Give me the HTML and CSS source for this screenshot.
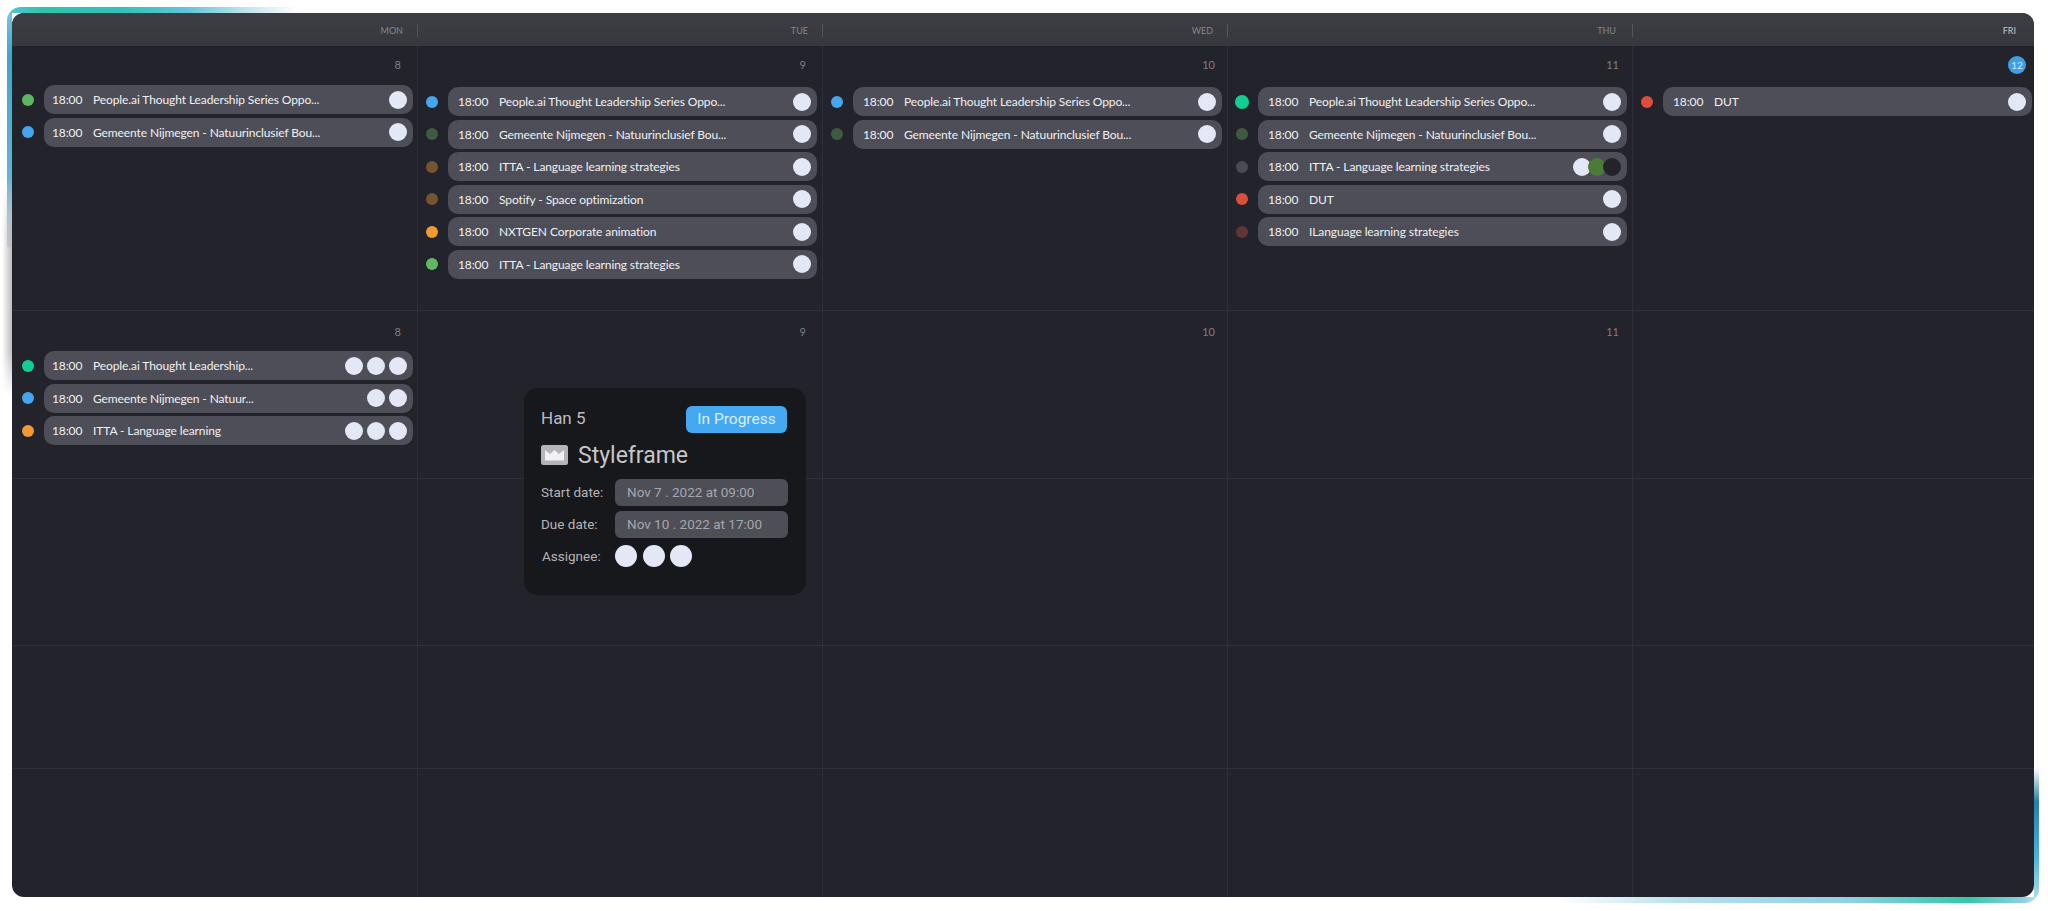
FILE: index.html
```html
<!DOCTYPE html>
<html>
<head>
    <title>Calendar</title>
    <link rel="stylesheet" href="styles.css">
</head>
<body>
    <div class="stage">
        <div class="edge-shade"></div>
        <div class="panel">
            <div class="week-head">
                <div class="day-name">MON</div>
                <div class="day-name">TUE</div>
                <div class="day-name">WED</div>
                <div class="day-name thu-name">THU</div>
                <div class="day-name today-name">FRI</div>
            </div>

            <div class="month">
                <!-- Week 1 -->
                <div class="cell cell-mon">
                    <div class="date">8</div>
                    <div class="events events-mon">
                        <div class="event"><span class="dot green"></span><div class="pill"><span class="time">18:00</span><span class="title">People.ai Thought Leadership Series Oppo...</span><span class="people"><i></i></span></div></div>
                        <div class="event"><span class="dot blue"></span><div class="pill"><span class="time">18:00</span><span class="title">Gemeente Nijmegen - Natuurinclusief Bou...</span><span class="people"><i></i></span></div></div>
                    </div>
                </div>
                <div class="cell">
                    <div class="date">9</div>
                    <div class="events">
                        <div class="event"><span class="dot blue"></span><div class="pill"><span class="time">18:00</span><span class="title">People.ai Thought Leadership Series Oppo...</span><span class="people"><i></i></span></div></div>
                        <div class="event"><span class="dot moss"></span><div class="pill"><span class="time">18:00</span><span class="title">Gemeente Nijmegen - Natuurinclusief Bou...</span><span class="people"><i></i></span></div></div>
                        <div class="event"><span class="dot brown"></span><div class="pill"><span class="time">18:00</span><span class="title">ITTA - Language learning strategies</span><span class="people"><i></i></span></div></div>
                        <div class="event"><span class="dot brown"></span><div class="pill"><span class="time">18:00</span><span class="title">Spotify - Space optimization</span><span class="people"><i></i></span></div></div>
                        <div class="event"><span class="dot orange"></span><div class="pill"><span class="time">18:00</span><span class="title">NXTGEN Corporate animation</span><span class="people"><i></i></span></div></div>
                        <div class="event"><span class="dot green"></span><div class="pill"><span class="time">18:00</span><span class="title">ITTA - Language learning strategies</span><span class="people"><i></i></span></div></div>
                    </div>
                </div>
                <div class="cell">
                    <div class="date date-ten">10</div>
                    <div class="events">
                        <div class="event"><span class="dot blue"></span><div class="pill"><span class="time">18:00</span><span class="title">People.ai Thought Leadership Series Oppo...</span><span class="people"><i></i></span></div></div>
                        <div class="event"><span class="dot moss"></span><div class="pill"><span class="time">18:00</span><span class="title">Gemeente Nijmegen - Natuurinclusief Bou...</span><span class="people"><i></i></span></div></div>
                    </div>
                </div>
                <div class="cell">
                    <div class="date date-eleven">11</div>
                    <div class="events">
                        <div class="event"><span class="dot teal big"></span><div class="pill"><span class="time">18:00</span><span class="title">People.ai Thought Leadership Series Oppo...</span><span class="people"><i></i></span></div></div>
                        <div class="event"><span class="dot moss"></span><div class="pill"><span class="time">18:00</span><span class="title">Gemeente Nijmegen - Natuurinclusief Bou...</span><span class="people"><i></i></span></div></div>
                        <div class="event"><span class="dot slate"></span><div class="pill"><span class="time">18:00</span><span class="title">ITTA - Language learning strategies</span><span class="people stacked"><i></i><i class="leaf"></i><i class="night"></i></span></div></div>
                        <div class="event"><span class="dot red"></span><div class="pill"><span class="time">18:00</span><span class="title">DUT</span><span class="people"><i></i></span></div></div>
                        <div class="event"><span class="dot maroon"></span><div class="pill"><span class="time">18:00</span><span class="title">ILanguage learning strategies</span><span class="people"><i></i></span></div></div>
                    </div>
                </div>
                <div class="cell cell-last">
                    <div class="date"><span class="today">12</span></div>
                    <div class="events">
                        <div class="event"><span class="dot red"></span><div class="pill"><span class="time">18:00</span><span class="title">DUT</span><span class="people"><i></i></span></div></div>
                    </div>
                </div>

                <!-- Week 2 -->
                <div class="cell cell-mon week-two">
                    <div class="date">8</div>
                    <div class="events events-low">
                        <div class="event"><span class="dot teal"></span><div class="pill"><span class="time">18:00</span><span class="title">People.ai Thought Leadership...</span><span class="people"><i></i><i></i><i></i></span></div></div>
                        <div class="event"><span class="dot blue"></span><div class="pill"><span class="time">18:00</span><span class="title">Gemeente Nijmegen - Natuur...</span><span class="people"><i></i><i></i></span></div></div>
                        <div class="event"><span class="dot orange"></span><div class="pill"><span class="time">18:00</span><span class="title">ITTA - Language learning</span><span class="people"><i></i><i></i><i></i></span></div></div>
                    </div>
                </div>
                <div class="cell week-two"><div class="date">9</div></div>
                <div class="cell week-two"><div class="date date-ten">10</div></div>
                <div class="cell week-two"><div class="date date-eleven">11</div></div>
                <div class="cell cell-last"></div>

                <!-- Empty weeks -->
                <div class="cell"></div><div class="cell"></div><div class="cell"></div><div class="cell"></div><div class="cell cell-last"></div>
                <div class="cell"></div><div class="cell"></div><div class="cell"></div><div class="cell"></div><div class="cell cell-last"></div>
                <div class="cell"></div><div class="cell"></div><div class="cell"></div><div class="cell"></div><div class="cell cell-last"></div>
            </div>

            <div class="card">
                <div class="card-top">
                    <span class="project">Han 5</span>
                    <span class="status">In Progress</span>
                </div>
                <div class="card-title">
                    <svg class="card-icon" viewBox="0 0 27 20">
                        <rect width="27" height="20" rx="2.5" fill="#b4b4ba"/>
                        <path d="M4 5 L9 9 L13.5 5 L18 9 L23 5 V15.5 H4 Z" fill="#f1f1f4"/>
                    </svg>
                    <span>Styleframe</span>
                </div>
                <div class="card-row">
                    <span class="card-label">Start date:</span>
                    <span class="card-field">Nov 7 . 2022 at 09:00</span>
                </div>
                <div class="card-row">
                    <span class="card-label">Due date:</span>
                    <span class="card-field">Nov 10 . 2022 at 17:00</span>
                </div>
                <div class="card-row">
                    <span class="card-label assignee">Assignee:</span>
                    <span class="card-people"><i></i><i></i><i></i></span>
                </div>
            </div>
        </div>
    </div>
</body>
</html>
```

FILE: styles.css
```css
body {
    margin: 0;
    background-color: #fff;
    font-family: 'Lato', sans-serif;
}

.stage {
    position: relative;
    padding: 13px 14px 14px 12px;
    height: 884px;
}

/* Colored glow peeking out behind the panel corners */
.stage::before {
    content: "";
    position: absolute;
    left: 7px;
    top: 7px;
    width: 290px;
    height: 240px;
    border-radius: 14px 0 0 0;
    background:
        linear-gradient(90deg, #5cc2d8 0, #2cc4ae 12%, #2fc3b8 40%, #62c4dc 62%, #bfe3ee 82%, rgba(255, 255, 255, 0) 100%) top left / 100% 6px no-repeat,
        linear-gradient(180deg, #7fc8e4 0, #3aa7cd 20%, #5fb5d6 70%, rgba(200, 200, 204, 0.8) 100%) top left / 5px 100% no-repeat;
}

.stage::after {
    content: "";
    position: absolute;
    right: 9px;
    bottom: 8px;
    width: 480px;
    height: 135px;
    border-radius: 0 0 14px 0;
    background:
        linear-gradient(90deg, rgba(255, 255, 255, 0) 0, #b8e0f0 25%, #8fd0e8 60%, #2fc9a8 85%, #8fd0e8 97%, #cfe8f4 100%) bottom right / 100% 6px no-repeat,
        linear-gradient(0deg, #b8e0ee 0, #4ab0d4 35%, #2a7fa6 75%, rgba(255, 255, 255, 0) 100%) bottom right / 5px 100% no-repeat;
}

/* Soft grey shadow down the left side */
.edge-shade {
    position: absolute;
    left: 2px;
    top: 180px;
    width: 10px;
    height: 215px;
    background: linear-gradient(90deg, rgba(190, 190, 195, 0), #bcbcc1);
    -webkit-mask-image: linear-gradient(180deg, transparent 0, #000 25%, #000 80%, transparent 100%);
    mask-image: linear-gradient(180deg, transparent 0, #000 25%, #000 80%, transparent 100%);
}

.panel {
    position: relative;
    z-index: 1;
    height: 884px;
    background-color: #23242b;
    border-radius: 12px;
    overflow: hidden;
    display: flex;
    flex-direction: column;
}

.week-head {
    display: grid;
    grid-template-columns: 406px repeat(3, 405px) 1fr;
    height: 33px;
    background: linear-gradient(180deg, #3d3d44, #37383e);
    flex-shrink: 0;
}

.day-name {
    height: 13px;
    margin-top: 11px;
    padding-right: 14px;
    border-right: 1px solid #55565c;
    color: #85868c;
    font-size: 9px;
    line-height: 13px;
    text-align: right;
}

.thu-name {
    padding-right: 16px;
}

.today-name {
    border-right: none;
    padding-right: 18px;
    color: #c4c5ca;
}

.month {
    flex: 1;
    display: grid;
    grid-template-columns: 406px repeat(3, 405px) 1fr;
    grid-template-rows: 265px 168px 167px 123px 1fr;
}

.cell {
    box-sizing: border-box;
    padding: 0 5px 0 8px;
    border-right: 1px solid #2f3037;
    border-bottom: 1px solid #2f3037;
}

.cell:nth-last-child(-n+5) {
    border-bottom: none;
}

.cell-mon {
    padding: 0 4px 0 10px;
}

.cell-last {
    border-right: none;
    padding-right: 2px;
}

.date {
    height: 18px;
    margin-top: 10px;
    padding-right: 11px;
    color: #7d7e84;
    font-size: 11px;
    line-height: 18px;
    text-align: right;
}

.week-two .date {
    margin-top: 12px;
}

.cell-mon .date {
    padding-right: 12px;
}

.date-ten {
    padding-right: 7px;
}

.date-eleven {
    padding-right: 8px;
}

.cell-last .date {
    padding-right: 6px;
}

.today {
    display: inline-block;
    width: 18px;
    height: 18px;
    border-radius: 50%;
    background-color: #3f9fe6;
    color: #cfe8fa;
    font-size: 10px;
    text-align: center;
}

.events {
    margin-top: 13px;
    display: flex;
    flex-direction: column;
    gap: 3.6px;
}

.events-mon {
    margin-top: 11px;
}

.events-low {
    margin-top: 10px;
}

.event {
    display: flex;
    align-items: center;
    gap: 10px;
}

.dot {
    width: 12px;
    height: 12px;
    border-radius: 50%;
    flex-shrink: 0;
}

.dot.big {
    width: 14px;
    height: 14px;
    margin: 0 -1px;
}

.green { background-color: #5fb662; }
.blue { background-color: #45a5ee; }
.moss { background-color: #3f5a42; }
.brown { background-color: #74552f; }
.orange { background-color: #f09a36; }
.teal { background-color: #10cf92; }
.slate { background-color: #4a4b52; }
.red { background-color: #dc4e3c; }
.maroon { background-color: #5f3634; }

.pill {
    flex: 1;
    height: 29px;
    display: flex;
    align-items: center;
    padding: 0 6px 0 10px;
    background-color: #4d4e57;
    border-radius: 10px;
    color: #f1f1f4;
    font-size: 12px;
    letter-spacing: -0.1px;
}

.cell-mon .pill {
    padding-left: 8px;
}

.time {
    width: 41px;
    flex-shrink: 0;
}

.title {
    flex: 1;
    white-space: nowrap;
}

.people {
    display: flex;
    gap: 4px;
}

.people i {
    width: 18px;
    height: 18px;
    border-radius: 50%;
    background-color: #e3e7f6;
}

.people.stacked {
    gap: 0;
}

.people.stacked i {
    margin-left: -3px;
}

.people i.leaf {
    background-color: #4c7a37;
}

.people i.night {
    background-color: #23242b;
}

/* Task popup over the grid */
.card {
    position: absolute;
    left: 512px;
    top: 375px;
    box-sizing: border-box;
    width: 282px;
    height: 207px;
    padding: 17px 18px 0 17px;
    background-color: #17181b;
    border-radius: 14px;
    font-family: 'Roboto', sans-serif;
}

.card-top {
    display: flex;
    justify-content: space-between;
    align-items: center;
    height: 28px;
}

.project {
    margin-top: -2px;
    color: #bcbdc2;
    font-size: 17px;
}

.status {
    width: 101px;
    height: 27px;
    margin-right: 1px;
    background-color: #45a9f2;
    border-radius: 6px;
    color: #d9eefc;
    font-size: 15.5px;
    line-height: 27px;
    text-align: center;
}

.card-title {
    display: flex;
    align-items: center;
    gap: 10px;
    height: 30px;
    margin: 7px 0 8.5px;
    color: #c6c6cb;
    font-size: 23px;
}

.card-icon {
    width: 27px;
    height: 20px;
}

.card-row {
    display: flex;
    align-items: center;
    height: 27px;
    margin-bottom: 5px;
}

.card-label {
    width: 74px;
    flex-shrink: 0;
    color: #b4b5ba;
    font-size: 13.5px;
}

.card-label.assignee {
    padding-left: 1px;
    width: 73px;
}

.card-field {
    flex: 1;
    height: 27px;
    padding-left: 12px;
    background-color: #4d4e56;
    border-radius: 6px;
    color: #a6a7ac;
    font-size: 13.5px;
    line-height: 27px;
}

.card-people {
    display: flex;
    gap: 5.5px;
}

.card-people i {
    width: 22px;
    height: 22px;
    border-radius: 50%;
    background-color: #e3e7f6;
}
```
